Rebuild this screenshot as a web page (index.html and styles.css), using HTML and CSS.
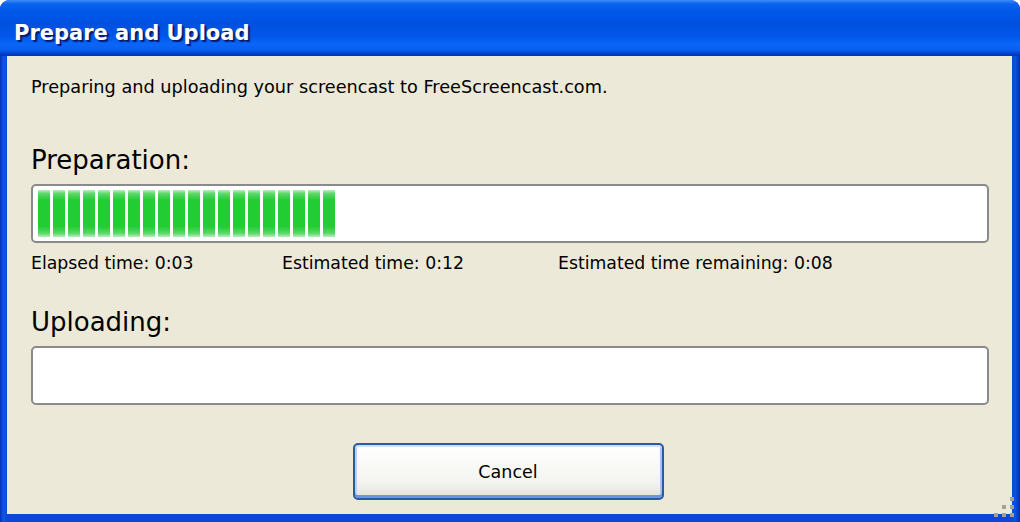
FILE: index.html
```html
<!DOCTYPE html>
<html lang="en">
<head>
    <meta charset="UTF-8">
    <title>Prepare and Upload</title>
    <link rel="stylesheet" href="styles.css">
</head>
<body>
    <div class="window">
        <div class="titlebar">Prepare and Upload</div>
        <div class="frame">
            <div class="content">
                <p class="intro">Preparing and uploading your screencast to FreeScreencast.com.</p>

                <div class="section-label">Preparation:</div>
                <div class="progress">
                    <div class="progress-fill" id="prep-fill"></div>
                </div>
                <div class="times">
                    <span class="time elapsed">Elapsed time: 0:03</span>
                    <span class="time estimated">Estimated time: 0:12</span>
                    <span class="time remaining">Estimated time remaining: 0:08</span>
                </div>

                <div class="section-label upload-label">Uploading:</div>
                <div class="progress">
                    <div class="progress-fill"></div>
                </div>

                <div class="actions">
                    <button class="btn">Cancel</button>
                </div>
            </div>
            <div class="grip">
                <i></i><i></i><i></i><i></i><i></i><i></i>
            </div>
        </div>
    </div>

    <script>
        // fill the preparation bar with 20 chunks
        const fill = document.getElementById('prep-fill');
        for (let i = 0; i < 20; i++) {
            const chunk = document.createElement('span');
            chunk.className = 'chunk';
            fill.appendChild(chunk);
        }
    </script>
</body>
</html>
```

FILE: styles.css
```css
html, body {
    margin: 0;
    height: 100%;
    background: #fff;
}
body {
    font-family: Tahoma, "DejaVu Sans", Verdana, sans-serif;
}
.window {
    width: 1020px;
    height: 522px;
    display: flex;
    flex-direction: column;
    background: linear-gradient(to right, #0030b8 0px, #0a55e0 3px, #0a55e0 5px, #0a48d8 7px, #0a48d8 1012px, #0a55e0 1015px, #0030b0 1020px);
    border-radius: 9px 9px 0 0;
    overflow: hidden;
}
.titlebar {
    height: 56px;
    flex: none;
    box-sizing: border-box;
    padding: 10px 0 0 14px;
    display: flex;
    align-items: center;
    color: #fff;
    font-weight: bold;
    font-size: 21px;
    text-shadow: 2px 2px 1px #0a1a70;
    background: linear-gradient(to bottom,
        #3d8cf8 0px, #0a62f0 4px, #0058ea 12px, #0050df 24px,
        #0057ea 36px, #0a66f8 44px, #0a5ef0 50px, #0040c8 54px, #0036b8 56px);
    border-radius: 9px 9px 0 0;
}
.frame {
    flex: 1;
    position: relative;
    margin: 0 8px 8px 7px;
    background: #ece9d8;
    display: flex;
    flex-direction: column;
}
.content {
    padding: 17px 23px 0 24px;
    display: flex;
    flex-direction: column;
}
.intro {
    margin: 0;
    font-size: 17.7px;
    line-height: 28px;
    color: #000;
}
.section-label {
    margin-top: 44px;
    font-size: 26px;
    line-height: 30px;
    color: #000;
}
.upload-label {
    margin-top: 32px;
}
.progress {
    margin-top: 9px;
    height: 59px;
    box-sizing: border-box;
    border: 2px solid #8a8a8a;
    border-radius: 5px;
    background: #fff;
    padding: 4px 5px;
    display: flex;
}
.progress-fill {
    display: flex;
    gap: 3px;
    height: 100%;
}
.chunk {
    width: 12px;
    height: 100%;
    background: linear-gradient(to bottom,
        #b8f0bc 0%, #5ad868 8%, #22cc33 22%, #22cc33 78%, #5ad868 92%, #b8f0bc 100%);
}
.times {
    display: flex;
    font-size: 17.3px;
    line-height: 24px;
    margin-top: 8px;
    color: #000;
}
.time.elapsed {
    width: 251px;
}
.time.estimated {
    width: 276px;
}
.actions {
    display: flex;
    justify-content: center;
    margin-top: 38px;
}
.btn {
    width: 311px;
    height: 57px;
    margin-right: 4px;
    font-family: inherit;
    font-size: 17.5px;
    color: #000;
    background: linear-gradient(to bottom, #ffffff 0%, #f4f4ef 70%, #e2e0d6 100%);
    border: 2px solid #2a5aa0;
    border-radius: 5px;
    box-shadow: inset 0 2px 0 #cee0fb, inset 0 -3px 0 #6d94e0, inset 2px 0 0 #b7d0f6, inset -2px 0 0 #a6c3f2;
    cursor: pointer;
}
.grip {
    position: absolute;
    right: 2px;
    bottom: 1px;
    width: 16px;
    height: 16px;
    display: grid;
    grid-template-columns: repeat(3, 4px);
    grid-template-rows: repeat(3, 4px);
    gap: 4px;
}
.grip i {
    background: #a5a295;
}
.grip i:nth-child(1) { grid-area: 1 / 3; }
.grip i:nth-child(2) { grid-area: 2 / 2; }
.grip i:nth-child(3) { grid-area: 2 / 3; }
.grip i:nth-child(4) { grid-area: 3 / 1; }
.grip i:nth-child(5) { grid-area: 3 / 2; }
.grip i:nth-child(6) { grid-area: 3 / 3; }
```
